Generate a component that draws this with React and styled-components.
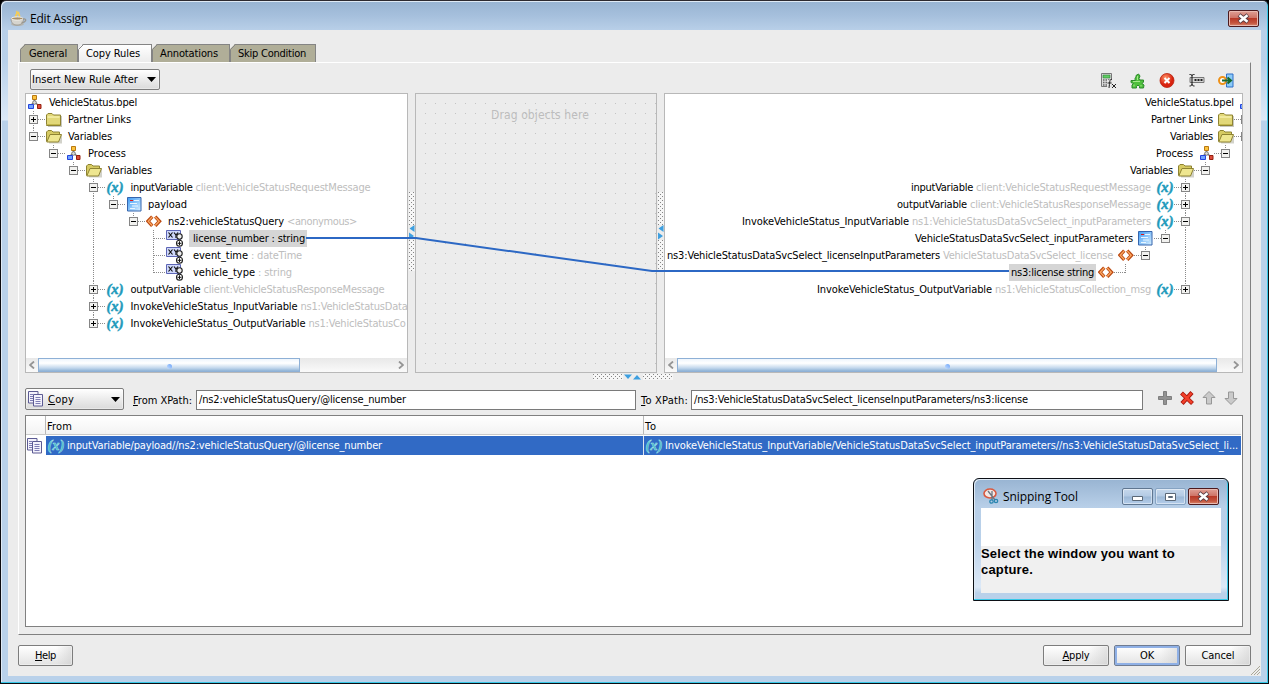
import React, { useLayoutEffect, useRef } from "react";
import styled, { createGlobalStyle, css } from "styled-components";

const Global = createGlobalStyle`
  * { box-sizing: border-box; }
  body { margin: 0; background: #000; overflow: hidden;
    font: 11px/17px Tahoma, "DejaVu Sans Condensed", "DejaVu Sans", sans-serif; color: #000; }
  svg { display: block; flex: none; }
`;

/* ---------- text ---------- */
const Text = styled.span`
  display: inline-block;
  flex: none;
  white-space: pre;
  width: ${(p) => p.$w}px;
  color: ${(p) => p.$color || "inherit"};
`;

// Spreads its letters so that the label is exactly w pixels wide.
function Label({ w, color, children, chars }) {
  const ref = useRef(null);
  const n = chars || String(children).length;
  useLayoutEffect(() => {
    const r = document.createRange();
    r.selectNodeContents(ref.current);
    ref.current.style.letterSpacing = "0px";
    const natural = r.getBoundingClientRect().width;
    ref.current.style.letterSpacing = (w - natural) / n + "px";
  }, [w, n]);
  return <Text ref={ref} $w={w} $color={color}>{children}</Text>;
}

/* ---------- window ---------- */
const Window = styled.div`
  width: 1269px; height: 684px; display: flex; flex-direction: column;
  border: 1px solid #0b0b10; border-top-color: #2d2a30; border-radius: 6px 6px 0 0;
  background: linear-gradient(#98b4d2 0, #a5bfdc 14px, #b8cfe8 29px, #b9d1ea 60px, #dce9f7 119px, #b9d1ea 120px);
  box-shadow: inset -1px -1px 0 #37c8e8, inset 1px 1px 0 #dfeaf5;
`;
const TitleBar = styled.div`
  height: 29px; flex: none; display: flex; align-items: center; padding: 6px 9px 0 9px;
  font: 12px/18px "Segoe UI", "Open Sans", "Noto Sans", sans-serif;
  & > svg { margin: 0 3px 0 0; }
`;
const Spacer = styled.div`flex: 1;`;
const CloseButton = styled.div`
  width: ${(p) => p.$w}px; height: ${(p) => p.$h}px; flex: none; border: 1px solid #4c1a1e; border-radius: 2px;
  display: flex; align-items: center; justify-content: center;
  background: linear-gradient(#dfa096 0, #cf7467 45%, #b83a28 50%, #c4553f 80%, #d98a70 100%);
  box-shadow: inset 0 0 0 1px #e9b9b0;
`;
const Body = styled.div`
  margin: 0 7px; width: 1253px; height: 646px; background: #ececec;
  display: flex; flex-direction: column; padding: 14px 10px 0; position: relative;
`;
const Grip = styled.div`position: absolute; right: 1px; bottom: 1px;`;

/* ---------- tabs ---------- */
const Tabs = styled.div`height: 18px; display: flex; padding-left: 2px;`;
const TabBox = styled.div`
  position: relative; width: ${(p) => p.$w}px; height: 18px; padding-left: ${(p) => p.$pad}px;
  background: ${(p) => (p.$on ? "linear-gradient(#fff, #ececec)" : "#b0ae98")};
  border-top: 1px solid #848484; border-right: 1px solid #848484;
  clip-path: polygon(5px 0, 100% 0, 100% 100%, 0 100%, 0 5px);
  & > svg { position: absolute; left: 0; top: -1px; }
`;
const Panel = styled.div`
  height: 573px; width: 1233px; flex: none; display: flex; flex-direction: column; padding-left: 6px;
  border: solid; border-width: 1px; border-color: #fff #808080 #808080 #fff;
`;

/* ---------- controls ---------- */
const raised = css`
  border: 1px solid #7d7d7d; border-radius: 2px;
  background: linear-gradient(#fff, #e8e8e8 60%, #dadada);
  box-shadow: inset 0 0 0 1px rgba(255,255,255,.35);
`;
const Toolbar = styled.div`height: 30px; display: flex; align-items: flex-start; padding: 6px 16px 0 5px;`;
const DropButton = styled.div`
  ${raised}
  width: ${(p) => p.$w}px; height: ${(p) => p.$h}px; flex: none; display: flex; align-items: center;
  justify-content: space-between; padding: 0 3px 0 1px;
`;
const DropLabel = styled.div`display: flex; align-items: center; gap: 4px; padding-left: 1px;`;
const ToolIcons = styled.div`display: flex; gap: 13px; padding-top: 4px;`;
const PushButton = styled.div`
  ${raised}
  width: ${(p) => p.$w}px; height: 21px; display: flex; align-items: center; justify-content: center;
  background: linear-gradient(90deg, rgba(255,255,255,0) 70%, rgba(200,200,200,.5)), linear-gradient(#fff, #e3e3e3);
  ${(p) => p.$default && "box-shadow: inset 0 0 0 2px #8fb0e6; border-color: #6f7c92;"}
`;
const Footer = styled.div`height: 31px; padding-top: 10px; display: flex; gap: 5px; width: 1233px;`;
const U = styled.u`text-underline-offset: 1px; text-decoration-thickness: 1px;`;

/* ---------- mapper ---------- */
const Mapper = styled.div`height: 280px; display: flex; position: relative;`;
const Pane = styled.div`
  width: ${(p) => p.$w}px; height: 280px; flex: none; border: 1px solid #b8b8b8; background: #fff;
  overflow: hidden; display: flex; flex-direction: column;
`;
const Tree = styled.div`height: 264px; flex: none; ${(p) => p.$mirror && "margin-right: -11px;"}`;
const Canvas = styled.div`
  width: 242px; height: 280px; flex: none; border: 1px solid #b8b8b8; padding: 13px 0 0 75px;
  font-size: 12px; color: #bdbdbd;
  background: conic-gradient(from 270deg at 1px 1px, #c3c3c3 90deg, transparent 0) 9px 9px / 10px 10px #ececec;
`;
const dots = css`
  background: conic-gradient(from 270deg at 1px 1px, #858585 90deg, transparent 0) 0 0 / 4px 4px,
    conic-gradient(from 270deg at 1px 1px, #858585 90deg, transparent 0) 2px 2px / 4px 4px, #f6f6f6;
`;
const VSplit = styled.div`
  width: ${(p) => p.$w}px; padding: 99px 1px 0; flex: none;
`;
const VGrip = styled.div`${dots} width: 6px; height: 79px; padding-top: 33px;`;
const HSplit = styled.div`height: 15px; padding: 1px 0 0 568px;`;
const HGrip = styled.div`${dots} width: 80px; height: 6px; padding-left: 30px;`;
const Wire = styled.svg`position: absolute; left: 0; top: 0; pointer-events: none;`;

const Row = styled.div`
  height: 17px; display: flex; flex-direction: ${(p) => (p.$mirror ? "row-reverse" : "row")};
`;
const Slot = styled.div`
  width: ${(p) => p.$w}px; height: 17px; flex: none; display: flex; align-items: center;
  padding-left: ${(p) => p.$dx || 0}px;
  justify-content: ${(p) => (p.$mirror ? "flex-end" : "flex-start")};
  ${(p) => p.$mirror && `& > svg { margin-right: ${-(p.$dx || 0)}px; }`}
  ${(p) => p.$root && !p.$mirror && "margin-left: 1px;"}
`;
const NodeText = styled.div`
  display: flex; gap: 3px; height: 17px; flex: none;
  ${(p) => p.$sel && `background: #d5d5d5; padding: 0 2px 0 ${p.$mirror ? 2 : 4}px;`}
`;

/* ---------- scroll bar ---------- */
const Scroll = styled.div`
  height: 14px; flex: none; display: flex; align-items: center; background: linear-gradient(#e8e8e8, #fafafa);
  & > svg { margin: 0 3px; }
`;
const Thumb = styled.div`
  width: ${(p) => p.$w}px; height: 14px; border: 1px solid #8eb0d6; display: flex; align-items: center; justify-content: center;
  background: linear-gradient(#eef5fc, #fff 35%, #c2d7ec 75%, #8fb3d6);
`;
const Bead = styled.div`width: 5px; height: 5px; margin-top: 2px; border-radius: 50%; background: linear-gradient(45deg, #c5dfff, #6fa4f8);`;

/* ---------- xpath row and table ---------- */
const XPathRow = styled.div`height: 27px; display: flex; padding-bottom: 5px; align-items: flex-start;`;
const FieldLabel = styled.div`padding: 4px 0 0 ${(p) => p.$l}px; width: ${(p) => p.$w}px; flex: none;`;
const Field = styled.div`
  margin-top: 2px; width: ${(p) => p.$w}px; height: 20px; flex: none; border: 1px solid #7a7a7a; background: #fff;
  padding: 0 0 0 2px; line-height: 18px;
`;
const RuleIcons = styled.div`display: flex; gap: 6px; padding: 2px 0 0 14px;`;
const Table = styled.div`width: 1218px; height: 212px; border: 1px solid #808080; background: #fff;`;
const HeadRow = styled.div`
  height: 19px; display: flex; background: linear-gradient(#fff, #f3f3f3); border-bottom: 1px solid #c9c9c9;
  width: 1215px; line-height: 21px;
`;
const HeadCell = styled.div`width: ${(p) => p.$w}px; padding-left: 1px; border-right: ${(p) => (p.$last ? 0 : 1)}px solid #b9b9b9;`;
const DataRow = styled.div`height: 20px; display: flex; padding-top: 1px;`;
const IconCell = styled.div`width: 20px; display: flex; align-items: center; padding-left: 1px;`;
const DataCell = styled.div`
  width: ${(p) => p.$w}px; height: 19px; background: #316ac5; color: #fff; display: flex; align-items: center; gap: 2px;
  padding-left: 1px; border-right: ${(p) => (p.$last ? 0 : 1)}px solid #dfe6f0; line-height: 19px;
`;

/* ---------- floating tool window ---------- */
const Tool = styled.div`
  position: absolute; left: 973px; top: 478px; width: 256px; height: 123px; border: 1px solid #0c1016;
  border-radius: 6px 6px 0 0; padding: 0 7px;
  background: linear-gradient(#98b4d2 0, #b8cfe8 28px, #b9d1ea 60px, #dce9f7 108px, #b9d1ea 114px);
  box-shadow: inset -1px -1px 0 #37c8e8, inset 1px 1px 0 #dfeaf5;
`;
const ToolTitle = styled.div`
  height: 29px; display: flex; align-items: center; padding: 6px 2px 0 2px; gap: 4px;
  font: 12px/18px "Segoe UI", "Open Sans", "Noto Sans", sans-serif;
`;
const ToolButtons = styled.div`display: flex; gap: 2px;`;
const FrameButton = styled.div`
  width: 31px; height: 17px; border: 1px solid ${(p) => (p.$off ? "#86a3c2" : "#5f7690")}; border-radius: 2px;
  background: linear-gradient(#c6d8ec, #b3cae4 48%, #9cb8d6 52%, #b4cdea);
  box-shadow: inset 0 0 0 1px rgba(255,255,255,.45); display: flex; align-items: center; justify-content: center;
  padding-top: ${(p) => (p.$off ? 0 : 3)}px;
`;
const ToolBody = styled.div`
  width: 240px; height: 85px; padding-top: 38px; background: linear-gradient(#fff 38px, #f0f0f0 38px);
  font: bold 13px/16px "Microsoft Sans Serif", "Liberation Sans", Arial, sans-serif;
  display: flex; flex-direction: column;
`;

/* ---------- icons ---------- */
const Cup = () => (
  <svg width="17" height="17" viewBox="0 0 17 17">
    <path d="M6.500 7C4 5 9 4 6.500 1M9 7C11 5 7 4 9 2" fill="none" stroke="#f5cc55" strokeWidth="1.800" />
    <ellipse cx="7.500" cy="14" rx="6.500" ry="2" fill="#b5b5b0" />
    <path d="M1 8.500h12.500c0 5-3 6.500-6.500 6.500S1 13 1 8.500z" fill="#d6d4ce" stroke="#8d8a82" strokeWidth=".7" />
    <ellipse cx="7.200" cy="8.500" rx="5.800" ry="1.600" fill="#a8906a" stroke="#f2f0ea" />
    <path d="M13 9c4.500-1 3 4-1.500 3.500" fill="none" stroke="#9a978f" strokeWidth="1.400" />
  </svg>
);
const Cross = () => (
  <svg width="13" height="11" viewBox="0 0 13 11">
    <path d="M2 2 11 9M11 2 2 9" stroke="#553c44" strokeWidth="4.200" />
    <path d="M2.500 2.300 10.500 8.700M10.500 2.300 2.500 8.700" stroke="#fff" strokeWidth="2.600" />
  </svg>
);
const Bpel = () => (
  <svg width="14" height="15" viewBox="0 0 14 15">
    <path d="M6.500 4v4M6.500 7 3 10M6.500 7 10 10" stroke="#777" strokeWidth="1.500" fill="none" />
    <circle cx="6.500" cy="7.500" r="1.800" fill="#ddd" stroke="#777" />
    <path d="M4.500.5h4v4h-4z" fill="#fcc33e" stroke="#b87912" />
    <path d="M.5 9.500h5v4h-5z" fill="#6fa4ff" stroke="#2443dd" />
    <path d="M9.500 9.500h3.500v4H9.500z" fill="#dd4b3c" stroke="#94200f" />
  </svg>
);
const Folder = () => (
  <svg width="17" height="15" viewBox="0 0 17 15">
    <path d="M2 4h14v11H2z" fill="#c8c8c0" />
    <path d="M.5 12.500V3l1.500-1.500h4L7.500 3H14.500v10.500H.5z" fill="#e2d879" stroke="#8e8332" />
    <path d="M1.500 5h12" stroke="#fffbc0" />
    <path d="M1 12.500h13" stroke="#c4b84d" />
  </svg>
);
const FolderOpen = () => (
  <svg width="17" height="15" viewBox="0 0 17 15">
    <path d="M3 6h13v8.500H3z" fill="#d2d2ca" />
    <path d="M.5 12.500V3l1.500-1.500h3.500L7 3h6.500v3" fill="#d6ca62" stroke="#8e8332" />
    <path d="M.8 13 4 5.500h11.500L12.500 13z" fill="#eee68f" stroke="#8e8332" />
  </svg>
);
const Variable = ({ color = "#1e9abb", hi = "#1e9abb" }) => (
  <svg width="18" height="17" viewBox="0 0 18 17">
    <text x="0.500" y="12.500" fontFamily="Liberation Serif, serif" fontStyle="italic" fontWeight="bold" fontSize="15"
      textLength="17" lengthAdjust="spacingAndGlyphs" fill={color} stroke={hi} strokeWidth=".5">(x)</text>
  </svg>
);
const Payload = () => (
  <svg width="15" height="15" viewBox="0 0 15 15">
    <defs><linearGradient id="pl" x2="1" y2="1"><stop stopColor="#3f9bf5" /><stop offset="1" stopColor="#d9f0ff" /></linearGradient></defs>
    <path d="M.5.500h13.500v13.500H.5z" fill="url(#pl)" stroke="#3565ad" />
    <path d="M3 3.500h3" stroke="#e01818" /><path d="M7 3.500h5M3 6.500h7M5 9h6M3 11.500h5" stroke="#e9f6ff" />
  </svg>
);
const Element = () => (
  <svg width="16" height="13" viewBox="0 0 16 13">
    <path d="M6.300 1.600 2 6.200l4.300 4.600M9.200 1.600l4.300 4.600-4.300 4.600" fill="none" stroke="#bb4a12" strokeWidth="3.400" />
    <path d="M6.200 1.900 2.200 6.200l4 4.300M9.200 1.900l4 4.300-4 4.300" fill="none" stroke="#fba661" strokeWidth="1.300" />
    <path d="M7.750 3.800v4.800" stroke="#fff" strokeWidth="1.600" />
  </svg>
);
const Attribute = () => (
  <svg width="19" height="17" viewBox="0 0 19 17">
    <path d="M.5.500h14v9H.5z" fill="#cfd8fb" stroke="#5c65b5" />
    <path d="M2.500 2.500l4 5M6.500 2.500l-4 5M8 2.500l2 2.500 2-2.500M10 5v3" stroke="#111" strokeWidth="1.200" fill="none" />
    <circle cx="13.500" cy="6.500" r="2.700" fill="#eee" stroke="#222" strokeWidth="1.100" />
    <circle cx="13.500" cy="13.300" r="3" fill="#fff" stroke="#222" strokeWidth="1.100" />
    <path d="M13.500 11.300v4M11.500 13.300h4" stroke="#111" />
  </svg>
);
const CopyIcon = () => (
  <svg width="16" height="16" viewBox="0 0 16 16">
    <path d="M.5.500h9.500v11.500H.5z" fill="#f3f2fc" stroke="#5c5b93" />
    <path d="M2 3.500h3M2 5.500h3M2 7.500h3M2 9.500h3" stroke="#7d7cb5" />
    <path d="M5.500 3.500H14.500V15H5.500z" fill="#f3f2fc" stroke="#5c5b93" />
    <path d="M7.500 6.500h5M7.500 8.500h5M7.500 10.500h5M7.500 12.500h5" stroke="#7d7cb5" />
  </svg>
);
const Calc = () => (
  <svg width="16" height="17" viewBox="0 0 16 17">
    <path d="M.5.500h10v13H.5z" fill="#ddd" stroke="#777" />
    <path d="M2 2h7v3H2z" fill="#5fce62" stroke="#2d7d35" strokeWidth=".6" />
    <path d="M2 7h7M2 9.500h7M2 12h7" stroke="#666" strokeWidth="1.300" strokeDasharray="1.500 1" />
    <path d="M6 7h9v8H6z" fill="#ececec" opacity=".85" />
    <path d="M11 6.500c-2.500-1-2 2-3 8.500M6.500 10h4M11 11l4 4M15 11l-4 4" stroke="#222" fill="none" />
  </svg>
);
const Puzzle = () => (
  <svg width="16" height="17" viewBox="0 0 16 17">
    <path d="M1 7.500h4.500C4.500 6.500 5 4.500 6 4V2.500L8.500 1 10 3 9 5.500l1 1.500h3.500v2l-1.500 1.500 2 1.500-.5 3h-4v-1.500L8 12l-1.500 1.500V15H2v-3l1.500-1.500L1 9.500z" fill="#4fbf3d" stroke="#2c8a2c" strokeLinejoin="round" />
    <path d="M7.500 3v4M3 8.500h7M4 11.500v2M11 12v1.500" stroke="#a3e98a" fill="none" />
  </svg>
);
const Delete = () => (
  <svg width="16" height="17" viewBox="0 0 16 17">
    <defs><radialGradient id="rd" cx=".4" cy=".3"><stop stopColor="#ff9468" /><stop offset="1" stopColor="#d8220f" /></radialGradient></defs>
    <circle cx="8" cy="7.500" r="7" fill="url(#rd)" stroke="#b8220e" strokeWidth=".8" />
    <path d="M5.500 5l5 5M10.500 5l-5 5" stroke="#fff" strokeWidth="2" />
  </svg>
);
const Rename = () => (
  <svg width="17" height="17" viewBox="0 0 17 17">
    <path d="M2 4.500h14v5H2z" fill="#d5d5d5" stroke="#777" />
    <path d="M6.500 7h8" stroke="#222" strokeWidth="2" strokeDasharray="2 1" />
    <path d="M1.500 1.500c1.500 0 2.500 0 2.500 1.500v8c0 1.500-1 2-2.500 2M6.500 1.500C5 1.500 4 1.500 4 3M6.500 13C5 13 4 12.500 4 11" stroke="#111" fill="none" />
  </svg>
);
const Goto = () => (
  <svg width="16" height="17" viewBox="0 0 16 17">
    <path d="M8.500 1h6.500v13H8.500z" fill="#8ccbf8" stroke="#2f6fc8" />
    <circle cx="4.500" cy="7.500" r="3.500" fill="#fff" stroke="#ee9118" strokeWidth="2" />
    <path d="M4 7.500h8M9.500 4.500l3.500 3-3.500 3" stroke="#17692e" strokeWidth="2" fill="none" />
  </svg>
);
const Plus = () => <svg width="16" height="16" viewBox="0 0 16 16"><path d="M6.500 1.500h3v5h5v3h-5v5h-3v-5h-5v-3h5z" fill="#929292" stroke="#6e6e6e" strokeWidth=".8" /></svg>;
const RedX = () => <svg width="16" height="16" viewBox="0 0 16 16"><path d="M2.500 3l11 10.500M13 2.500 3 13.500" stroke="#a8160b" strokeWidth="4.200" /><path d="M3 3.500l10 9.500M12.500 3 3.500 13" stroke="#f2402a" strokeWidth="2.600" /></svg>;
const Arrow = ({ down }) => (
  <svg width="16" height="16" viewBox="0 0 16 16">
    <path transform={down ? "rotate(180 8 8)" : undefined} d="M8 1.500 14 7.500h-3.500v6.500h-5V7.500H2z" fill="#cacaca" stroke="#979797" />
  </svg>
);
const Caret = () => <svg width="9" height="5" viewBox="0 0 9 5"><path d="M0 0h9L4.500 5z" /></svg>;
const Chevron = ({ right }) => (
  <svg width="6" height="8" viewBox="0 0 6 8"><path d={right ? "M1 .5 5 4 1 7.500" : "M5 .5 1 4 5 7.500"} fill="none" stroke="#949494" strokeWidth="1.800" /></svg>
);
const Snip = () => (
  <svg width="16" height="17" viewBox="0 0 16 17">
    <ellipse cx="7" cy="5.500" rx="6" ry="4.500" fill="#f4e8e4" stroke="#d9593f" strokeWidth="1.600" />
    <path d="M5 3l7 9M9 3v9" stroke="#6d7780" strokeWidth="1.300" />
    <circle cx="8.500" cy="13.500" r="1.700" fill="none" stroke="#2a86b0" strokeWidth="1.300" /><circle cx="13" cy="13" r="1.700" fill="none" stroke="#2a86b0" strokeWidth="1.300" />
  </svg>
);
const icons = { bpel: Bpel, folder: Folder, open: FolderOpen, variable: Variable, payload: Payload, element: Element, attribute: Attribute };
const nudge = { bpel: [1, 1], folder: [0, 2], open: [0, 2], variable: [0, 1], payload: [1, 0], element: [0, 1], attribute: [0, 0] };

// One 20px column of the tree's guide lines, with its expander if it has one.
function Guide({ kind, mirror }) {
  const top = kind !== " ";
  const bottom = "|PMT".includes(kind);
  const branch = "PpMmTL".includes(kind);
  const box = "PpMm".includes(kind);
  return (
    <svg width="20" height="17" viewBox="0 0 20 17" shapeRendering="crispEdges">
      <g transform={mirror ? "matrix(-1 0 0 1 20 0)" : undefined} stroke="#8b8b8b" strokeDasharray="1 1">
        {top && <path d={bottom ? "M7.500 0V17" : "M7.500 0V9"} />}
        {branch && <path d="M8 8.500h12" />}
        {box && (
          <g strokeDasharray="none">
            <path d="M3.500 4.500h8v8h-8z" fill="#f2f2f0" stroke="#858585" />
            <path d="M5 8.500h5" stroke="#000" />
            {"Pp".includes(kind) && <path d="M7.500 6v5" stroke="#000" />}
          </g>
        )}
      </g>
    </svg>
  );
}

const GREY = "#bdbdbd";
function Node({ mirror, guides, icon, slot, name, w, type, tw, sel }) {
  const Icon = icons[icon];
  return (
    <Row $mirror={mirror}>
      {guides.split("").map((k, i) => <Guide key={i} kind={k} mirror={mirror} />)}
      <Slot $w={slot} $mirror={mirror} $root={!guides} $dx={nudge[icon][mirror ? 1 : 0]}>
        <Icon />
      </Slot>
      <NodeText $sel={sel} $mirror={mirror}>
        <Label w={w}>{name}</Label>
        {type && <Label w={tw} color={GREY}>{type}</Label>}
      </NodeText>
    </Row>
  );
}

const source = [
  ["", "bpel", 22, "VehicleStatus.bpel", 88],
  ["P", "folder", 22, "Partner Links", 63],
  ["m", "open", 22, "Variables", 44],
  [" m", "bpel", 22, "Process", 38],
  ["  m", "open", 22, "Variables", 44],
  ["   M", "variable", 24.5, "inputVariable", 62, "client:VehicleStatusRequestMessage", 175],
  ["   |m", "payload", 22, "payload", 39],
  ["   | m", "element", 22, "ns2:vehicleStatusQuery", 116, "<anonymous>", 70],
  ["   |  T", "attribute", 23, "license_number : string", 112, null, 0, true],
  ["   |  T", "attribute", 27, "event_time", 55, ": dateTime", 51],
  ["   |  L", "attribute", 27, "vehicle_type", 62, ": string", 34],
  ["   P", "variable", 24.5, "outputVariable", 70, "client:VehicleStatusResponseMessage", 181],
  ["   P", "variable", 24.5, "InvokeVehicleStatus_InputVariable", 167, "ns1:VehicleStatusData", 107],
  ["   p", "variable", 24.5, "InvokeVehicleStatus_OutputVariable", 175, "ns1:VehicleStatusCo", 97],
];
const target = [
  ["", "bpel", 19, "VehicleStatus.bpel", 89],
  ["P", "folder", 20, "Partner Links", 62],
  ["m", "open", 20, "Variables", 43],
  [" m", "bpel", 20, "Process", 37],
  ["  m", "open", 20, "Variables", 43],
  ["   P", "variable", 22, "inputVariable", 62, "client:VehicleStatusRequestMessage", 175],
  ["   P", "variable", 22, "outputVariable", 70, "client:VehicleStatusResponseMessage", 181],
  ["   M", "variable", 22, "InvokeVehicleStatus_InputVariable", 167, "ns1:VehicleStatusDataSvcSelect_inputParameters", 239],
  ["   |m", "payload", 20, "VehicleStatusDataSvcSelect_inputParameters", 218],
  ["   | m", "element", 20, "ns3:VehicleStatusDataSvcSelect_licenseInputParameters", 273, "VehicleStatusDataSvcSelect_license", 170],
  ["   |  L", "element", 17, "ns3:license string", 83, null, 0, true],
  ["   p", "variable", 22, "InvokeVehicleStatus_OutputVariable", 175, "ns1:VehicleStatusCollection_msg", 156],
];
const renderTree = (rows, mirror) => (
  <Tree $mirror={mirror}>
    {rows.map(([guides, icon, slot, name, w, type, tw, sel], i) => (
      <Node key={i} {...{ guides, icon, slot, name, w, type, tw, sel, mirror }} />
    ))}
  </Tree>
);

const tabs = [
  ["General", 58, 9, 38], ["Copy Rules", 74, 8, 54, true], ["Annotations", 78, 8, 58], ["Skip Condition", 86, 8, 68],
];

const SplitArrows = () => (
  <svg width="6" height="15" viewBox="0 0 6 15"><path d="M0 0h6v15H0z" fill="#ececec" /><path d="M5.500 0v7L.5 3.500zM0 7.500v7L5 11z" fill="#3d9fe0" /></svg>
);

export default function App() {
  return (
    <>
      <Global />
      <Window>
        <TitleBar>
          <Cup />
          <Label w={58}>Edit Assign</Label>
          <Spacer />
          <CloseButton $w={31} $h={17}><Cross /></CloseButton>
        </TitleBar>
        <Body>
          <Tabs>
            {tabs.map(([t, w, pad, tw, on]) => (
              <TabBox key={t} $w={w} $pad={pad} $on={on}>
                <svg width="6" height="18"><path d="M.5 18V5.500L5.500.500" fill="none" stroke="#848484" /></svg>
                <Label w={tw}>{t}</Label>
              </TabBox>
            ))}
          </Tabs>
          <Panel>
            <Toolbar>
              <DropButton $w={130} $h={21}><Label w={106}>Insert New Rule After</Label><Caret /></DropButton>
              <Spacer />
              <ToolIcons><Calc /><Puzzle /><Delete /><Rename /><Goto /></ToolIcons>
            </Toolbar>
            <Mapper>
              <Pane $w={383}>
                {renderTree(source, false)}
                <Scroll><Chevron /><Thumb $w={262}><Bead /></Thumb><Spacer /><Chevron right /></Scroll>
              </Pane>
              <VSplit $w={7}><VGrip><SplitArrows /></VGrip></VSplit>
              <Canvas><Label w={98}>Drag objects here</Label></Canvas>
              <VSplit $w={7}><VGrip><SplitArrows /></VGrip></VSplit>
              <Pane $w={579}>
                {renderTree(target, true)}
                <Scroll><Chevron /><Thumb $w={540}><Bead /></Thumb><Spacer /><Chevron right /></Scroll>
              </Pane>
              <Wire width="1218" height="280">
                <path d="M281 145H391L627 178H984" fill="none" stroke="#2c68c4" strokeWidth="2" />
              </Wire>
            </Mapper>
            <HSplit>
              <HGrip>
                <svg width="20" height="6"><path d="M0 0h20v6H0z" fill="#ececec" /><path d="M1 .5h8L5 5zM10 5.500h8L14 1z" fill="#3d9fe0" /></svg>
              </HGrip>
            </HSplit>
            <XPathRow>
              <DropButton $w={99} $h={22}>
                <DropLabel><CopyIcon /><Label w={26} chars={4}><U>C</U>opy</Label></DropLabel>
                <Caret />
              </DropButton>
              <FieldLabel $l={9} $w={72}><Label w={59} chars={11}><U>F</U>rom XPath:</Label></FieldLabel>
              <Field $w={440}><Label w={207}>/ns2:vehicleStatusQuery/@license_number</Label></Field>
              <FieldLabel $l={5} $w={55}><Label w={47} chars={9}><U>T</U>o XPath:</Label></FieldLabel>
              <Field $w={452}><Label w={334}>/ns3:VehicleStatusDataSvcSelect_licenseInputParameters/ns3:license</Label></Field>
              <RuleIcons><Plus /><RedX /><Arrow /><Arrow down /></RuleIcons>
            </XPathRow>
            <Table>
              <HeadRow>
                <HeadCell $w={20} /><HeadCell $w={598}><Label w={25}>From</Label></HeadCell><HeadCell $last $w={597}><Label w={12}>To</Label></HeadCell>
              </HeadRow>
              <DataRow>
                <IconCell><CopyIcon /></IconCell>
                <DataCell $w={598}><Variable color="#3fb4c4" hi="#a8e6ea" /><Label w={315}>inputVariable/payload//ns2:vehicleStatusQuery/@license_number</Label></DataCell>
                <DataCell $last $w={597}><Variable color="#3fb4c4" hi="#a8e6ea" /><Label w={573}>InvokeVehicleStatus_InputVariable/VehicleStatusDataSvcSelect_inputParameters//ns3:VehicleStatusDataSvcSelect_li...</Label></DataCell>
              </DataRow>
            </Table>
          </Panel>
          <Footer>
            <PushButton $w={55}><Label w={21} chars={4}><U>H</U>elp</Label></PushButton>
            <Spacer />
            <PushButton $w={66}><Label w={27} chars={5}><U>A</U>pply</Label></PushButton>
            <PushButton $w={66} $default><Label w={14}>OK</Label></PushButton>
            <PushButton $w={66}><Label w={33}>Cancel</Label></PushButton>
          </Footer>
          <Grip><svg width="9" height="9"><path d="M0 9 9 0M3 9 9 3M6 9 9 6" stroke="#a9a797" /></svg></Grip>
        </Body>
      </Window>
      <Tool>
        <ToolTitle>
          <Snip />
          <Label w={75}>Snipping Tool</Label>
          <Spacer />
          <ToolButtons>
            <FrameButton><svg width="11" height="5"><path d="M.5.500h10v4H.5z" fill="#fff" stroke="#5b6877" /></svg></FrameButton>
            <FrameButton $off><svg width="11" height="8"><path d="M.5.500h10v7H.5z" fill="#fff" stroke="#5b6877" /><path d="M3.500 3.500h4v1h-4z" fill="#fff" stroke="#5b6877" /></svg></FrameButton>
            <CloseButton $w={31} $h={17}><Cross /></CloseButton>
          </ToolButtons>
        </ToolTitle>
        <ToolBody><Label w={194}>Select the window you want to</Label><Label w={52}>capture.</Label></ToolBody>
      </Tool>
    </>
  );
}
